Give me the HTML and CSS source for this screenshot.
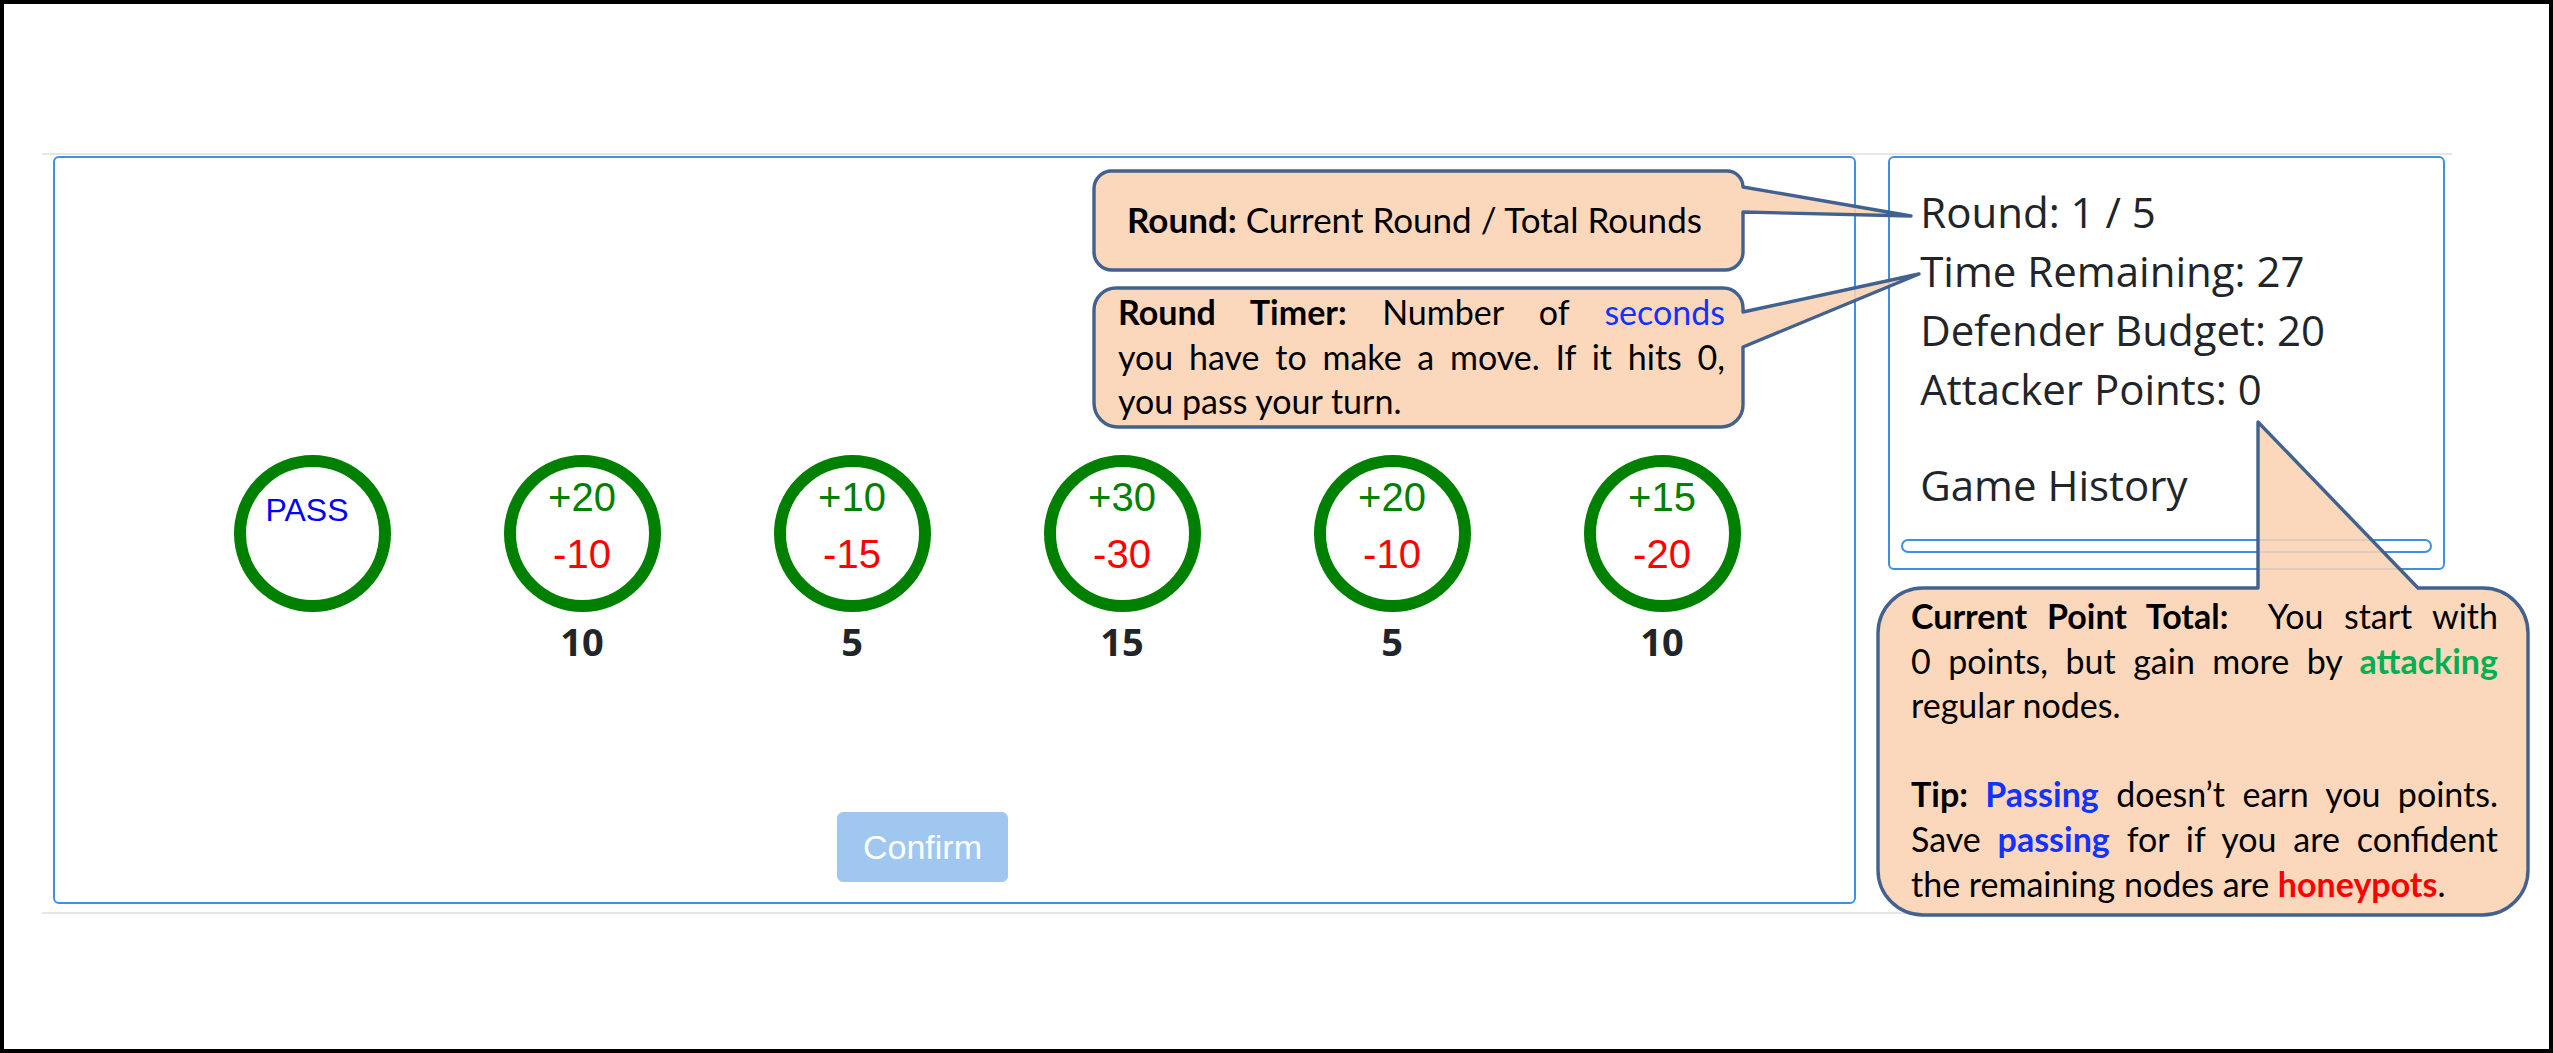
FILE: index.html
```html
<!DOCTYPE html>
<html lang="en">
<head>
<meta charset="utf-8">
<title>Game</title>
<link rel="stylesheet" href="styles.css">
</head>
<body>
<div class="frame">
  <div class="container">
    <section class="board">
      <div class="nodes">
        <div class="node">
          <div class="ring"><div class="pass">PASS</div></div>
        </div>
        <div class="node">
          <div class="ring"><div class="gain">+20</div><div class="loss">-10</div></div>
          <div class="cost">10</div>
        </div>
        <div class="node">
          <div class="ring"><div class="gain">+10</div><div class="loss">-15</div></div>
          <div class="cost">5</div>
        </div>
        <div class="node">
          <div class="ring"><div class="gain">+30</div><div class="loss">-30</div></div>
          <div class="cost">15</div>
        </div>
        <div class="node">
          <div class="ring"><div class="gain">+20</div><div class="loss">-10</div></div>
          <div class="cost">5</div>
        </div>
        <div class="node">
          <div class="ring"><div class="gain">+15</div><div class="loss">-20</div></div>
          <div class="cost">10</div>
        </div>
      </div>
      <button class="confirm" disabled>Confirm</button>
    </section>
    <aside class="stats">
      <div class="stat-lines">
        <div>Round: 1 / 5</div>
        <div>Time Remaining: 27</div>
        <div>Defender Budget: 20</div>
        <div>Attacker Points: 0</div>
      </div>
      <h4 class="history">Game History</h4>
      <div class="progress"></div>
    </aside>
  </div>
</div>

<svg class="overlay" width="2553" height="1053" viewBox="0 0 2553 1053" xmlns="http://www.w3.org/2000/svg">
  <path class="callout" d="M1110,171 H1727 A16,16 0 0 1 1743,187 L1911,216 L1743,212 V252 A18,18 0 0 1 1725,270 H1112 A18,18 0 0 1 1094,252 V189 A18,18 0 0 1 1110,171 Z"/>
  <path class="callout" d="M1116,288 H1723 A20,20 0 0 1 1743,308 V312 L1919,274 L1743,347 V405 A22,22 0 0 1 1721,427 H1118 A24,24 0 0 1 1094,403 V310 A22,22 0 0 1 1116,288 Z"/>
  <path class="callout" d="M1923,588 H2258 V422 L2418,588 H2483 A45,45 0 0 1 2528,633 V870 A45,45 0 0 1 2483,915 H1923 A45,45 0 0 1 1878,870 V633 A45,45 0 0 1 1923,588 Z"/>
</svg>

<div class="note note-round"><b>Round:</b> Current Round / Total Rounds</div>
<div class="note note-timer">
  <div class="j"><b>Round Timer:</b> Number of <span class="blue">seconds</span></div>
  <div class="j">you have to make a move. If it hits 0,</div>
  <div>you pass your turn.</div>
</div>
<div class="note note-points">
  <div class="j"><b>Current Point Total:</b>&nbsp; You start with</div>
  <div class="j">0 points, but gain more by <b class="green">attacking</b></div>
  <div>regular nodes.</div>
  <div class="blank">&nbsp;</div>
  <div class="j"><b>Tip:</b> <b class="blue">Passing</b> doesn’t earn you points.</div>
  <div class="j">Save <b class="blue">passing</b> for if you are confident</div>
  <div>the remaining nodes are <b class="red">honeypots</b>.</div>
</div>
</body>
</html>
```

FILE: styles.css
```css
html, body {
  margin: 0;
  padding: 0;
  background: #ffffff;
}

body {
  position: relative;
  width: 2553px;
  height: 1053px;
  overflow: hidden;
  font-family: "Open Sans", "Noto Sans", sans-serif;
  color: #212529;
}

.frame {
  box-sizing: border-box;
  width: 2553px;
  height: 1053px;
  border: 4px solid #000000;
  padding-top: 149px;
  padding-left: 38px;
}

.container {
  width: 2410px;
  box-sizing: border-box;
  border-top: 2px solid #e6e6e6;
  border-bottom: 2px solid #e6e6e6;
  padding: 1px 7px 8px 11px;
  display: flex;
  align-items: flex-start;
  gap: 32px;
}

.board {
  box-sizing: border-box;
  width: 1804px;
  border: 2px solid #3f90e4;
  border-radius: 6px;
  padding: 297px 0 20px 0;
}

.nodes {
  display: flex;
  padding-left: 122px;
}

.node {
  width: 270px;
  display: flex;
  flex-direction: column;
  align-items: center;
}

.ring {
  box-sizing: border-box;
  width: 157px;
  height: 157px;
  border: 12px solid #008000;
  border-radius: 50%;
  padding-top: 2px;
  text-align: center;
  font-family: "Liberation Sans", Arial, sans-serif;
  font-size: 40px;
  line-height: 57px;
}

.gain { color: #008000; }
.loss { color: #ff0000; }

.pass {
  color: #0000ff;
  font-size: 32px;
  padding-top: 13px;
  text-indent: -10px;
}

.cost {
  margin-top: 3px;
  font-family: "Open Sans", sans-serif;
  font-weight: 700;
  font-size: 38px;
  line-height: 52px;
  color: #212529;
}

.confirm {
  display: block;
  margin: 145px 0 0 782px;
  box-sizing: border-box;
  width: 171px;
  height: 70px;
  padding: 0;
  background: #9fc7f0;
  border: 1px solid #9fc7f0;
  border-radius: 6px;
  color: #ffffff;
  font-family: "Liberation Sans", Arial, sans-serif;
  font-size: 34px;
}

.stats {
  box-sizing: border-box;
  width: 557px;
  border: 2px solid #3f90e4;
  border-radius: 6px;
  padding: 24px 11px 15px 11px;
}

.stat-lines {
  padding-left: 19px;
  font-size: 42px;
  line-height: 59px;
}

.history {
  margin: 37px 0 0 0;
  padding-left: 19px;
  font-size: 42px;
  line-height: 59px;
  font-weight: 400;
}

.progress {
  box-sizing: border-box;
  margin-top: 25px;
  height: 14px;
  border: 2px solid #3f90e4;
  border-radius: 7px;
}

.overlay {
  position: absolute;
  top: 0;
  left: 0;
  pointer-events: none;
}

.callout {
  fill: #fbd3b3;
  fill-opacity: 0.88;
  stroke: #41618f;
  stroke-width: 3.4;
  stroke-linejoin: round;
}

.note {
  position: absolute;
  font-family: Lato, "Open Sans", sans-serif;
  font-size: 34px;
  line-height: 44.6px;
  color: #000000;
}

.note b { font-weight: 700; }

.note-round {
  left: 1127px;
  top: 197px;
  font-size: 35px;
  white-space: nowrap;
}

.note-timer {
  left: 1118px;
  top: 290px;
  width: 607px;
}

.note-points {
  left: 1911px;
  top: 594px;
  width: 587px;
}

.j {
  text-align: justify;
  text-align-last: justify;
}

.blue { color: #1133ff; }
.green { color: #00b050; }
.red { color: #ff0000; }
```
